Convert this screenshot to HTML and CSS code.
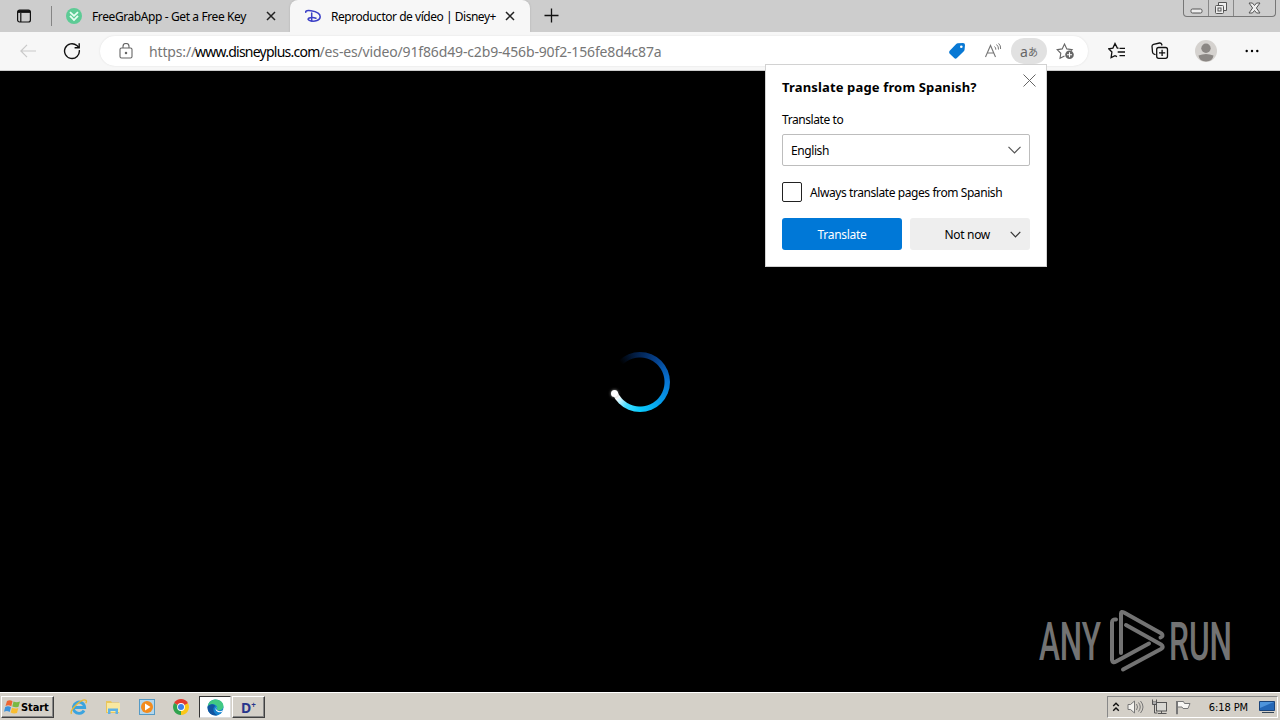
FILE: index.html
```html
<!DOCTYPE html>
<html lang="en">
<head>
    <meta charset="UTF-8">
    <meta name="viewport" content="width=device-width, initial-scale=1.0">
    <title>Reproductor de vídeo | Disney+</title>
    <link rel="stylesheet" href="styles.css">
</head>
<body>
    <!-- Tabs -->
    <header class="tab-strip">
        <div class="tab-actions">
            <svg width="16" height="16" viewBox="0 0 16 16" fill="none" stroke="#111" stroke-width="1.2"><rect x="1.600" y="2" width="12.800" height="12" rx="2"/><path d="M2 3.500h12" stroke-width="2.800"/><path d="M4.800 5v9"/></svg>
        </div>
        <div class="tab">
            <svg class="favicon" width="16" height="16" viewBox="0 0 16 16"><circle cx="8" cy="8" r="8" fill="#5dcb95"/><path d="M4 4.2l4 3.6 4-3.6M4 7.8l4 4.2 4-4.2" fill="none" stroke="#e9fff3" stroke-width="1.8"/></svg>
            <span class="tab-title first-title">FreeGrabApp - Get a Free Key</span>
            <svg class="close" width="10" height="10" viewBox="0 0 10 10"><path d="M1 1l8 8M9 1l-8 8"/></svg>
        </div>
        <div class="tab active">
            <svg class="favicon" width="16" height="16" viewBox="0 0 16 16" fill="none" stroke="#3b3fc6" stroke-width="1.5" stroke-linecap="round"><path d="M.8 4.2C.2 2.6 3 2.4 6 2.8c5 .7 9.2 3 9.2 6 0 3.800-5.500 4.700-9.200 4.200-2.800-.4-3.800-2.200-1.800-3 2-.8 5-.6 6.800.2"/><path d="M6.700 5v8"/></svg>
            <span class="tab-title second-title">Reproductor de vídeo | Disney+</span>
            <svg class="close" width="10" height="10" viewBox="0 0 10 10"><path d="M1 1l8 8M9 1l-8 8"/></svg>
        </div>
        <svg class="new-tab" width="15" height="15" viewBox="0 0 15 15"><path d="M7.500 .5v14M.5 7.500h14"/></svg>
        <div class="window-buttons">
            <span class="win-btn"><svg width="13" height="6" viewBox="0 0 13 6"><rect x="1" y="1" width="11" height="4" rx="1.500"/></svg></span>
            <span class="win-btn"><svg width="14" height="14" viewBox="0 0 14 14"><path d="M4.500 4V1.500h8v8H10"/><rect x="1.500" y="4.500" width="8" height="8" rx="1"/><rect x="4" y="7" width="3" height="3"/></svg></span>
            <span class="win-btn win-close"><svg width="13" height="12" viewBox="0 0 13 12"><path d="M1 1h3.400l2.100 2.500L8.600 1H12L8.400 6l3.600 5H8.600L6.500 8.500 4.400 11H1l3.600-5z"/></svg></span>
        </div>
    </header>

    <!-- Toolbar -->
    <nav class="toolbar">
        <span class="slot back"><svg width="16" height="14" viewBox="0 0 16 14" fill="none" stroke="#c9c9c9" stroke-width="1.200"><path d="M7 .8L.9 7 7 13.200M1 7h15"/></svg></span>
        <span class="slot reload"><svg width="18" height="18" viewBox="0 0 18 18" fill="none" stroke="#111" stroke-width="1.400"><path d="M16.300 8.200A7.400 7.400 0 1 1 13.900 3.600L16 5.600"/><path d="M16.200 1.200v4.600h-4.600"/></svg></span>
        <div class="address">
            <svg class="lock" width="14" height="16" viewBox="0 0 14 16" fill="none" stroke="#666" stroke-width="1.100"><rect x="1" y="5" width="12" height="10" rx="1.500"/><path d="M4 5V3.500a3 3 0 0 1 6 0V5"/><circle cx="7" cy="10" r=".7" fill="#666"/></svg>
            <span class="url">https://<b>www.disneyplus.com</b>/es-es/video/91f86d49-c2b9-456b-90f2-156fe8d4c87a</span>
            <span class="tool"><svg width="18" height="18" viewBox="0 0 18 18"><path d="M9.800 1.200l5.200-.2q2 0 2 2l-.4 4.600q0 1-1 1.800l-6.700 6.700q-1.400 1.300-2.700 0L1.500 11.400q-1-1.300.2-2.600L8.200 2q.8-.7 1.600-.8z" fill="#0878d4"/><circle cx="13.300" cy="4.800" r="1.300" fill="#fff"/></svg></span>
            <span class="tool"><svg width="18" height="18" viewBox="0 0 18 18" fill="none" stroke="#777" stroke-width="1.100"><path d="M1.500 15L6.500 3.500 11.500 15M3.300 11h6.400"/><path d="M10.500 4.500q1.500 1.200 1.300 3.200M12.500 2.500q2.300 2 2 5M14.600 1.400q2.400 2.200 2 5.600" stroke-width="1"/></svg></span>
            <span class="tool translate">a<small>あ</small></span>
            <span class="tool"><svg width="19" height="18" viewBox="0 0 19 18" fill="none" stroke="#666" stroke-width="1.100"><path d="M8.500 14L4 16.300l.8-5L1.200 7.700l5-.8L8.500 2l2.300 4.900 5.300.8-1.200 1.200"/><circle cx="13.500" cy="12.800" r="4.300" fill="#666" stroke="none"/><path d="M13.500 10.300v5M11 12.800h5" stroke="#fff"/></svg></span>
        </div>
        <span class="slot favorites"><svg width="18" height="18" viewBox="0 0 18 18" fill="none" stroke="#111" stroke-width="1.300"><path d="M10.500 6.300L9.200 5.900 7 1.500 4.900 6.100.8 6.800 3.900 10l-.8 5.700L7 13.700l2 .9M11.500 6.300H17M9.700 10H17M11.500 13.700H17"/></svg></span>
        <span class="slot collections"><svg width="18" height="18" viewBox="0 0 18 18" fill="none" stroke="#111" stroke-width="1.300"><path d="M4.500 12.800L2.500 11.700Q1.600 11 1.500 10L1 4.200Q1 2.700 2.500 2.300L8.500 1q1.700-.2 2.200 1.300l.3 1.200"/><rect x="5.700" y="5.500" width="10.800" height="10.800" rx="2"/><path d="M11.100 7.800v6.200M8 10.900h6.200"/></svg></span>
        <span class="slot profile"><svg width="22" height="22" viewBox="0 0 22 22"><circle cx="11" cy="11" r="11" fill="#d5d2cf"/><circle cx="11" cy="8.300" r="4.700" fill="#8b8784"/><path d="M3.500 15.500q7.500-3 15 0-.8 5.800-7.500 6-6.700-.2-7.500-6z" fill="#8b8784"/></svg></span>
        <span class="slot more"><svg width="14" height="4" viewBox="0 0 14 4"><circle cx="1.700" cy="2" r="1.200"/><circle cx="7" cy="2" r="1.200"/><circle cx="12.300" cy="2" r="1.200"/></svg></span>
    </nav>

    <!-- Translate popup -->
    <section class="popup">
        <svg class="popup-close" width="13" height="13" viewBox="0 0 13 13"><path d="M.5 .5l12 12M12.500 .5l-12 12"/></svg>
        <h1>Translate page from Spanish?</h1>
        <p class="popup-label">Translate to</p>
        <div class="select"><span>English</span><svg width="13" height="8" viewBox="0 0 13 8"><path d="M.5 .8l6 6 6-6"/></svg></div>
        <div class="check"><span class="checkbox"></span><span class="check-text">Always translate pages from Spanish</span></div>
        <div class="buttons">
            <div class="button primary">Translate</div>
            <div class="button split"><span>Not now</span><svg width="11" height="7" viewBox="0 0 11 7"><path d="M.7 .8l4.800 5 4.800-5"/></svg></div>
        </div>
    </section>

    <!-- Video player -->
    <main class="player">
        <div class="spinner"><span class="spinner-head"></span></div>
        <svg class="watermark" width="240" height="74" viewBox="0 0 240 74">
            <text x="1" y="57" textLength="62" lengthAdjust="spacingAndGlyphs">ANY</text>
            <g fill="none" stroke="#737373" stroke-width="4" stroke-linejoin="round" stroke-linecap="round" transform="translate(1 6)">
                <path d="M82 44V4.500Q82 2 85 3.500L122.500 24.500Q125 27 121.500 28.500"/>
                <path d="M87 16L122 35.500Q125.500 38 122 40L84 60.500"/>
                <path d="M77 10.500Q73 10 73 13.500V51Q73.500 54.500 77 52.500L110 34.500"/>
            </g>
            <text x="131" y="57" textLength="63" lengthAdjust="spacingAndGlyphs">RUN</text>
        </svg>
    </main>

    <!-- Taskbar -->
    <footer class="taskbar">
        <div class="start">
            <svg width="17" height="16" viewBox="0 0 17 16"><path d="M3 2q3-1.500 5.500.2L7.300 7.300Q4.500 5.500 1.500 7z" fill="#ee6531"/><path d="M9.500 2.500q3 1.500 6.500 0L14.500 7.800q-3 1.200-6.200-.2z" fill="#79b943"/><path d="M1.200 8q3-1.500 5.800.2L5.700 13Q3 11.200 0 12.700z" fill="#3d92db"/><path d="M8 8.700q3 1.500 6.300.2L13 14q-3.300 1.200-6.300-.6z" fill="#f8bd31"/></svg>
            <span>Start</span>
        </div>
        <div class="quick">
            <span class="task"><svg width="18" height="18" viewBox="0 0 18 18" fill="none"><path d="M14 12.500A5.700 5.700 0 1 1 14.700 9.500H4" stroke="#3ba4df" stroke-width="2.800"/><path d="M1.500 15.800C-.8 12 12 0 16 2.300q1 .7-.2 3" stroke="#e8b936" stroke-width="1.400"/></svg></span>
            <span class="task"><svg width="18" height="18" viewBox="0 0 18 18"><path d="M2 3h5l1 1.500h7V15H2z" fill="#e9c65d"/><path d="M3 5h13v9H3z" fill="#f9e8a0"/><path d="M4 16v-5.500h10V16h-2.500v-3h-5v3z" fill="#5fb2e5"/></svg></span>
            <span class="task"><svg width="16" height="16" viewBox="0 0 16 16"><rect x=".5" y=".5" width="15" height="15" fill="#b3d6ec" stroke="#559ac5"/><circle cx="8" cy="8" r="6" fill="#f38b1d"/><path d="M6 4.500v7l5.500-3.500z" fill="#fff"/></svg></span>
            <span class="task"><svg width="16" height="16" viewBox="0 0 16 16"><path d="M8 8L1.100 4A8 8 0 0 1 14.900 4z" fill="#e33b2e"/><path d="M8 8V16A8 8 0 0 1 1.100 4z" fill="#30a34e"/><path d="M8 8l6.900-4A8 8 0 0 1 8 16z" fill="#fbc718"/><path d="M8 4h6.900L8 8z" fill="#e33b2e"/><circle cx="8" cy="8" r="3.900" fill="#fff"/><circle cx="8" cy="8" r="3" fill="#3c80e8"/></svg></span>
            <span class="task pressed"><svg width="17" height="17" viewBox="0 0 17 17"><circle cx="8.500" cy="8.500" r="8" fill="#1383cf"/><path d="M.7 7.300C1.500 2.500 5 .5 8.700.5c5 0 8 3.700 7.800 7-.2 3-3.200 4.300-6 3.400q-1.300-.6-.3-1.900C11 6.500 5.500 2.800.7 7.300z" fill="#41c984"/><path d="M.7 7.300C3 4.500 7 4.500 8.200 7c-3 1.800-2.200 7.300 2.500 9.200C5.500 17.500-.3 13.500.7 7.300z" fill="#12549f"/><path d="M9.800 7.500q-2 3 1.200 4.300 2.400 1 4.800-.6l.2 1q-2.700 1.800-5.500.5Q7 10.800 9.800 7.500z" fill="#fff"/></svg></span>
            <span class="task raised">D<sup>+</sup></span>
        </div>
        <div class="tray">
            <svg width="8" height="10" viewBox="0 0 8 10" fill="none" stroke="#111" stroke-width="1.400"><path d="M1.200 4L4 1.300 6.800 4M1.200 8.700L4 6l2.800 2.700"/></svg>
            <svg width="17" height="16" viewBox="0 0 17 16" fill="none" stroke="#777"><path d="M1 5.500h2.500L7.500 2v12l-4-3.500H1z" fill="#f4f3ef"/><path d="M9.500 5q2 3 0 6M11.500 3.500q3.500 4.500 0 9M13.500 2q5 6 0 12"/></svg>
            <svg width="17" height="16" viewBox="0 0 17 16" fill="none" stroke="#555"><rect x="5.500" y="3.500" width="10" height="8.500" fill="#d8d7d2"/><path d="M7 14.500h8.500M10.500 12v2.500"/><path d="M1.500 .5v5h4v-5M3.500 5.500v8.500h3"/><path d="M1.500 3h4v2h-4z" fill="#fff"/></svg>
            <svg width="17" height="16" viewBox="0 0 17 16" fill="#f7f6f3" stroke="#777"><path d="M2.500 2v13h-1V2M2.500 2.500h6l1 2h5.500l-2 5H8l-1-1.500H2.500z"/></svg>
            <span class="clock">6:18 PM</span>
            <svg width="16" height="14" viewBox="0 0 16 14"><path d="M.5 1.500h15v9H.5z" fill="#2467b6" stroke="#1a447a"/><path d="M1 2h14L1 8z" fill="#4e94db"/><path d="M3 12.500h12" stroke="#345"/></svg>
        </div>
    </footer>
</body>
</html>
```
FILE: styles.css
```css
/* General Styles */
* {
    box-sizing: border-box;
}
body {
    margin: 0;
    width: 1280px;
    height: 720px;
    overflow: hidden;
    background: #000;
    color: #000;
    font-family: 'Noto Sans', 'Open Sans', sans-serif;
    font-size: 12px;
    display: flex;
    flex-direction: column;
}
svg {
    display: block;
    flex-shrink: 0;
}
/* Tabs */
.tab-strip {
    height: 32px;
    background: #cdcdcd;
    display: flex;
    flex-shrink: 0;
}
.tab-actions {
    width: 52px;
    margin: 6px 0;
    padding: 2px 0 0 16px;
    border-right: 1px solid #858585;
}
.tab {
    width: 238px;
    display: flex;
    align-items: center;
    padding: 0 14px;
}
.tab-title {
    margin-left: 10px;
    flex: 1;
    white-space: nowrap;
}
.first-title {
    letter-spacing: -0.4px;
}
.second-title {
    letter-spacing: -0.47px;
}
.close {
    fill: none;
    stroke: #222;
    stroke-width: 1.5;
}
.tab.active {
    width: 240px;
    padding: 0 15px;
    background: #f7f7f7;
    border-radius: 8px 8px 0 0;
    box-shadow: 0 0 2px #aaa;
}
.new-tab {
    margin: 8px 0 0 14px;
    fill: none;
    stroke: #111;
    stroke-width: 1.3;
}
.window-buttons {
    display: flex;
    height: 17px;
    margin: 0 4px 0 auto;
    border: 1px solid #777;
    border-top: 0;
    border-radius: 0 0 4px 4px;
}
.win-btn {
    width: 25px;
    display: flex;
    align-items: center;
    justify-content: center;
    border-right: 1px solid #888;
    fill: #eee;
    stroke: #555;
}
.win-btn:first-child {
    padding-top: 5px;
}
.win-close {
    width: 41px;
    border-right: 0;
}
/* Toolbar */
.toolbar {
    height: 39px;
    background: #f7f7f7;
    border-bottom: 1px solid #ccc;
    display: flex;
    align-items: center;
    flex-shrink: 0;
}
.slot {
    display: flex;
    align-items: center;
    justify-content: center;
}
.back {
    width: 56px;
}
.reload {
    width: 32px;
}
.address {
    width: 988px;
    height: 30px;
    margin: 0 7px 0 12px;
    padding: 0 5px 0 19px;
    background: #fff;
    border-radius: 15px;
    box-shadow: 0 0 2px #ddd;
    display: flex;
    align-items: center;
}
.url {
    flex: 1;
    margin-left: 16px;
    font-size: 14px;
    letter-spacing: -0.15px;
    color: #767676;
    white-space: nowrap;
}
.url b {
    margin-left: -1px;
    font-weight: normal;
    letter-spacing: -0.76px;
    color: #000;
}
.tool {
    width: 36px;
    height: 26px;
    display: flex;
    align-items: center;
    justify-content: center;
}
.translate {
    background: #e1e1e1;
    border-radius: 13px;
    color: #666;
    font-size: 14px;
}
.translate small {
    font-family: 'Noto Sans CJK JP', sans-serif;
    font-size: 10px;
}
.favorites {
    width: 44px;
}
.collections {
    width: 42px;
}
.profile {
    width: 49px;
}
.more {
    width: 43px;
}
/* Translate popup */
.popup {
    position: absolute;
    z-index: 2;
    left: 765px;
    top: 64px;
    width: 282px;
    height: 203px;
    padding: 13px 16px 16px;
    background: #fff;
    border: 1px solid #d2d2d2;
    letter-spacing: -0.42px;
}
.popup-close {
    position: absolute;
    top: 9px;
    right: 10px;
    stroke: #666;
}
.popup h1 {
    margin: 0;
    font-size: 13px;
    line-height: 19px;
    letter-spacing: 0.15px;
    white-space: nowrap;
}
.popup-label {
    margin: 14px 0 6px;
    line-height: 17px;
}
.select {
    height: 32px;
    padding: 0 8px;
    border: 1px solid #bdbdbd;
    border-radius: 2px;
    display: flex;
    align-items: center;
    justify-content: space-between;
    fill: none;
    stroke: #555;
}
.select svg,
.split svg {
    stroke-width: 1.2;
}
.check {
    margin: 16px 0;
    display: flex;
    align-items: center;
    gap: 8px;
    white-space: nowrap;
}
.checkbox {
    width: 20px;
    height: 20px;
    border: 1px solid #222;
    border-radius: 2px;
}
.buttons {
    display: flex;
    gap: 8px;
    letter-spacing: -0.3px;
}
.button {
    width: 120px;
    height: 32px;
    border-radius: 3px;
    display: flex;
    align-items: center;
    justify-content: center;
    background: #eee;
}
.button.primary {
    background: #0078d7;
    color: #fff;
}
.button.split {
    justify-content: flex-end;
    gap: 20px;
    padding-right: 9px;
    fill: none;
    stroke: #333;
}
.select span,
.split span {
    stroke: none;
}
/* Video player */
.player {
    flex: 1;
    display: flex;
    align-items: center;
    justify-content: center;
    padding-top: 1px;
    background: #000;
    position: relative;
}
.spinner {
    width: 60px;
    height: 60px;
    position: relative;
    border-radius: 50%;
    background:
        radial-gradient(circle, #000 24px, transparent 25px),
        conic-gradient(from 315deg, #000 0deg, #03204a 38deg, #06408a 80deg, #0872d2 130deg, #0799e8 175deg, #0bcafc 225deg, #45dcff 255deg, #fff 280deg, #fff 291deg, #000 292deg);
}
.spinner-head {
    position: absolute;
    left: 1px;
    top: 38px;
    width: 7px;
    height: 7px;
    border-radius: 50%;
    background: #fff;
    box-shadow: 0 0 3px #aaa;
}
.watermark {
    position: absolute;
    left: 1038px;
    bottom: 15px;
    fill: #737373;
    font-family: Roboto, sans-serif;
    font-size: 53px;
    font-weight: 500;
}
/* Taskbar */
.taskbar {
    height: 28px;
    padding: 2px 2px 1px 1px;
    background: #d4d0c8;
    border-top: 1px solid #fff;
    display: flex;
    align-items: center;
    flex-shrink: 0;
}
.start {
    width: 53px;
    height: 22px;
    padding-left: 2px;
    border: 1px solid;
    border-color: #fff #404040 #404040 #fff;
    box-shadow: inset -1px -1px #888;
    display: flex;
    align-items: center;
    font-family: 'DejaVu Sans Condensed', 'DejaVu Sans', sans-serif;
    font-size: 11px;
    font-weight: bold;
    letter-spacing: -0.1px;
}
.quick {
    display: flex;
    margin-left: 8px;
}
.task {
    width: 34px;
    height: 22px;
    display: flex;
    align-items: center;
    justify-content: center;
}
.pressed {
    width: 32px;
    margin-left: 1px;
    background: #fff;
    border: 1px solid;
    border-color: #333 #ddd #ddd #333;
}
.raised {
    width: 33px;
    margin-left: 1px;
    border: 1px solid;
    border-color: #fff #404040 #404040 #fff;
    box-shadow: inset -1px -1px #888;
    color: #28358c;
    font-size: 14px;
    font-weight: bold;
}
.raised sup {
    font-size: 8px;
    margin-top: -6px;
}
.tray {
    height: 22px;
    margin-left: auto;
    padding: 0 2px 0 4px;
    border: 1px solid;
    border-color: #888 #fff #fff #888;
    display: flex;
    align-items: center;
    gap: 7px;
}
.clock {
    margin: 0 4px 0 10px;
    font-family: 'DejaVu Sans Condensed', 'DejaVu Sans', sans-serif;
    font-size: 11px;
    letter-spacing: -0.1px;
}
```
